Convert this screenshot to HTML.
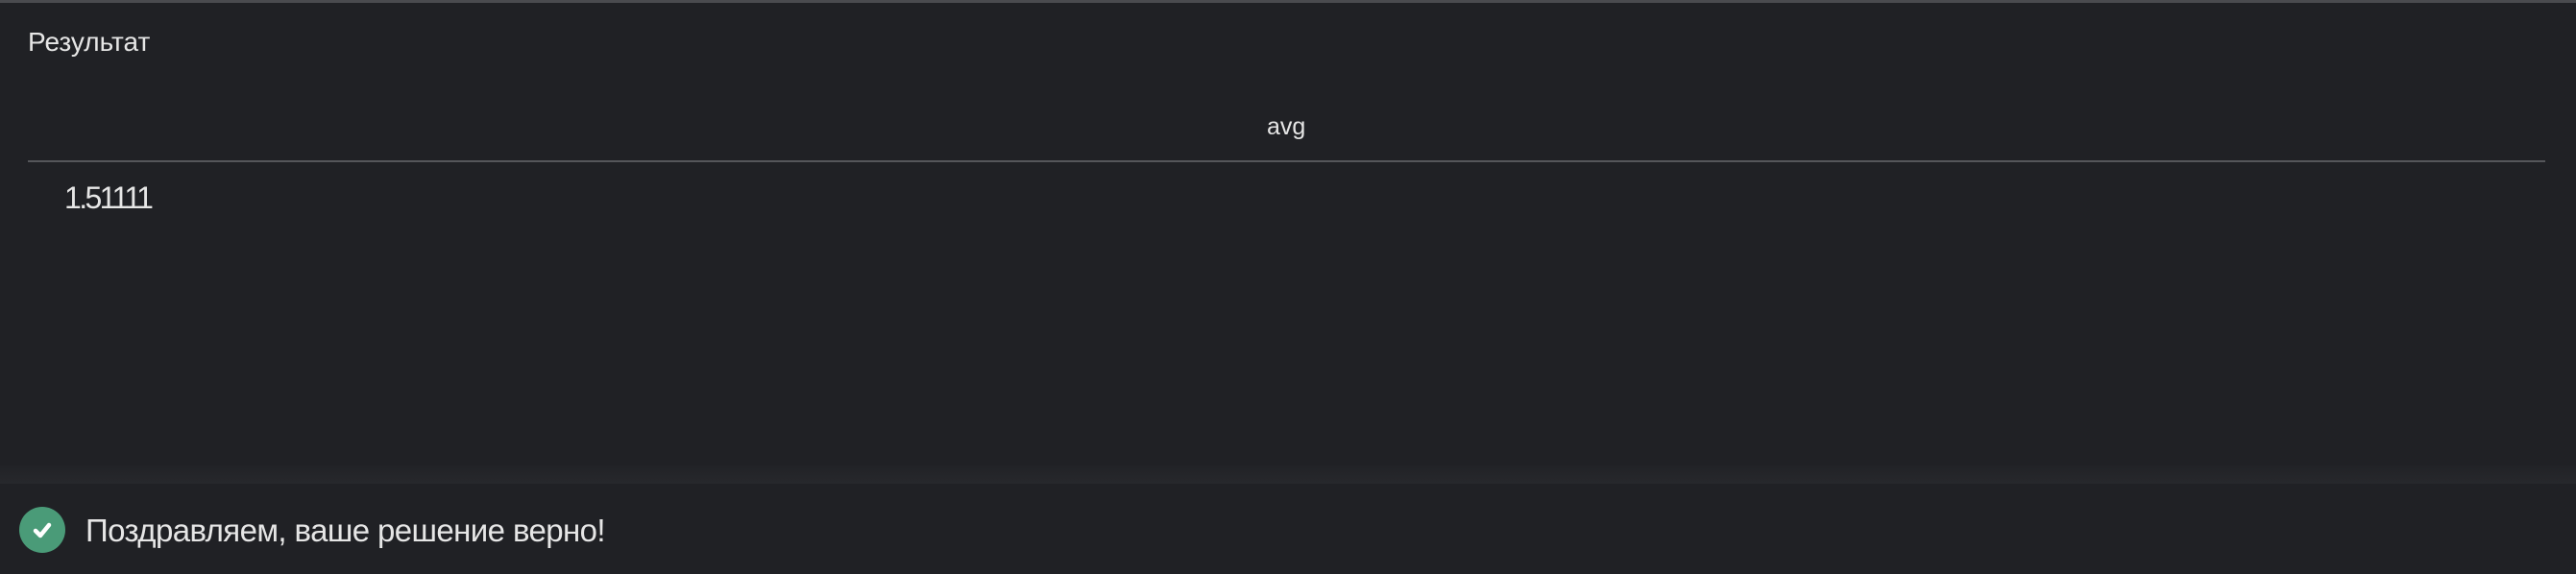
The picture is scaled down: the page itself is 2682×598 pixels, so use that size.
<!DOCTYPE html>
<html><head><meta charset="utf-8"><style>
html,body{margin:0;padding:0;width:2682px;height:598px;overflow:hidden;background:#202125;font-family:"Liberation Sans","DejaVu Sans",sans-serif;}
.top{position:absolute;left:0;top:0;width:2682px;height:3px;background:#4a4b4f;}
.t{position:absolute;color:#e6e6e6;white-space:nowrap;}
.line{position:absolute;left:29px;top:167px;width:2621px;height:2px;background:#55565a;}
.band{position:absolute;left:0;top:484px;width:2682px;height:20px;background:linear-gradient(#212226,#27282c);}
.bar{position:absolute;left:0;top:504px;width:2682px;height:94px;background:#202125;}
.circ{position:absolute;left:20px;top:528px;width:48px;height:48px;border-radius:50%;background:#4a9b78;}
</style></head><body>
<div class="top"></div>
<div class="t" style="left:29px;top:28px;font-size:28px;">Результат</div>
<div class="t" style="left:1319px;top:118px;font-size:25px;">avg</div>
<div class="line"></div>
<div class="t" style="left:67px;top:188px;font-size:32px;letter-spacing:-2.6px;">1.51111</div>
<div class="band"></div>
<div class="bar"></div>
<div class="circ"><svg width="48" height="48" viewBox="0 0 48 48"><path d="M17 25 L22 30 L31 19" stroke="#fff" stroke-width="4.5" fill="none" stroke-linecap="round" stroke-linejoin="round"/></svg></div>
<div class="t" style="left:89px;top:534px;font-size:33px;letter-spacing:-0.6px;">Поздравляем, ваше решение верно!</div>
</body></html>
